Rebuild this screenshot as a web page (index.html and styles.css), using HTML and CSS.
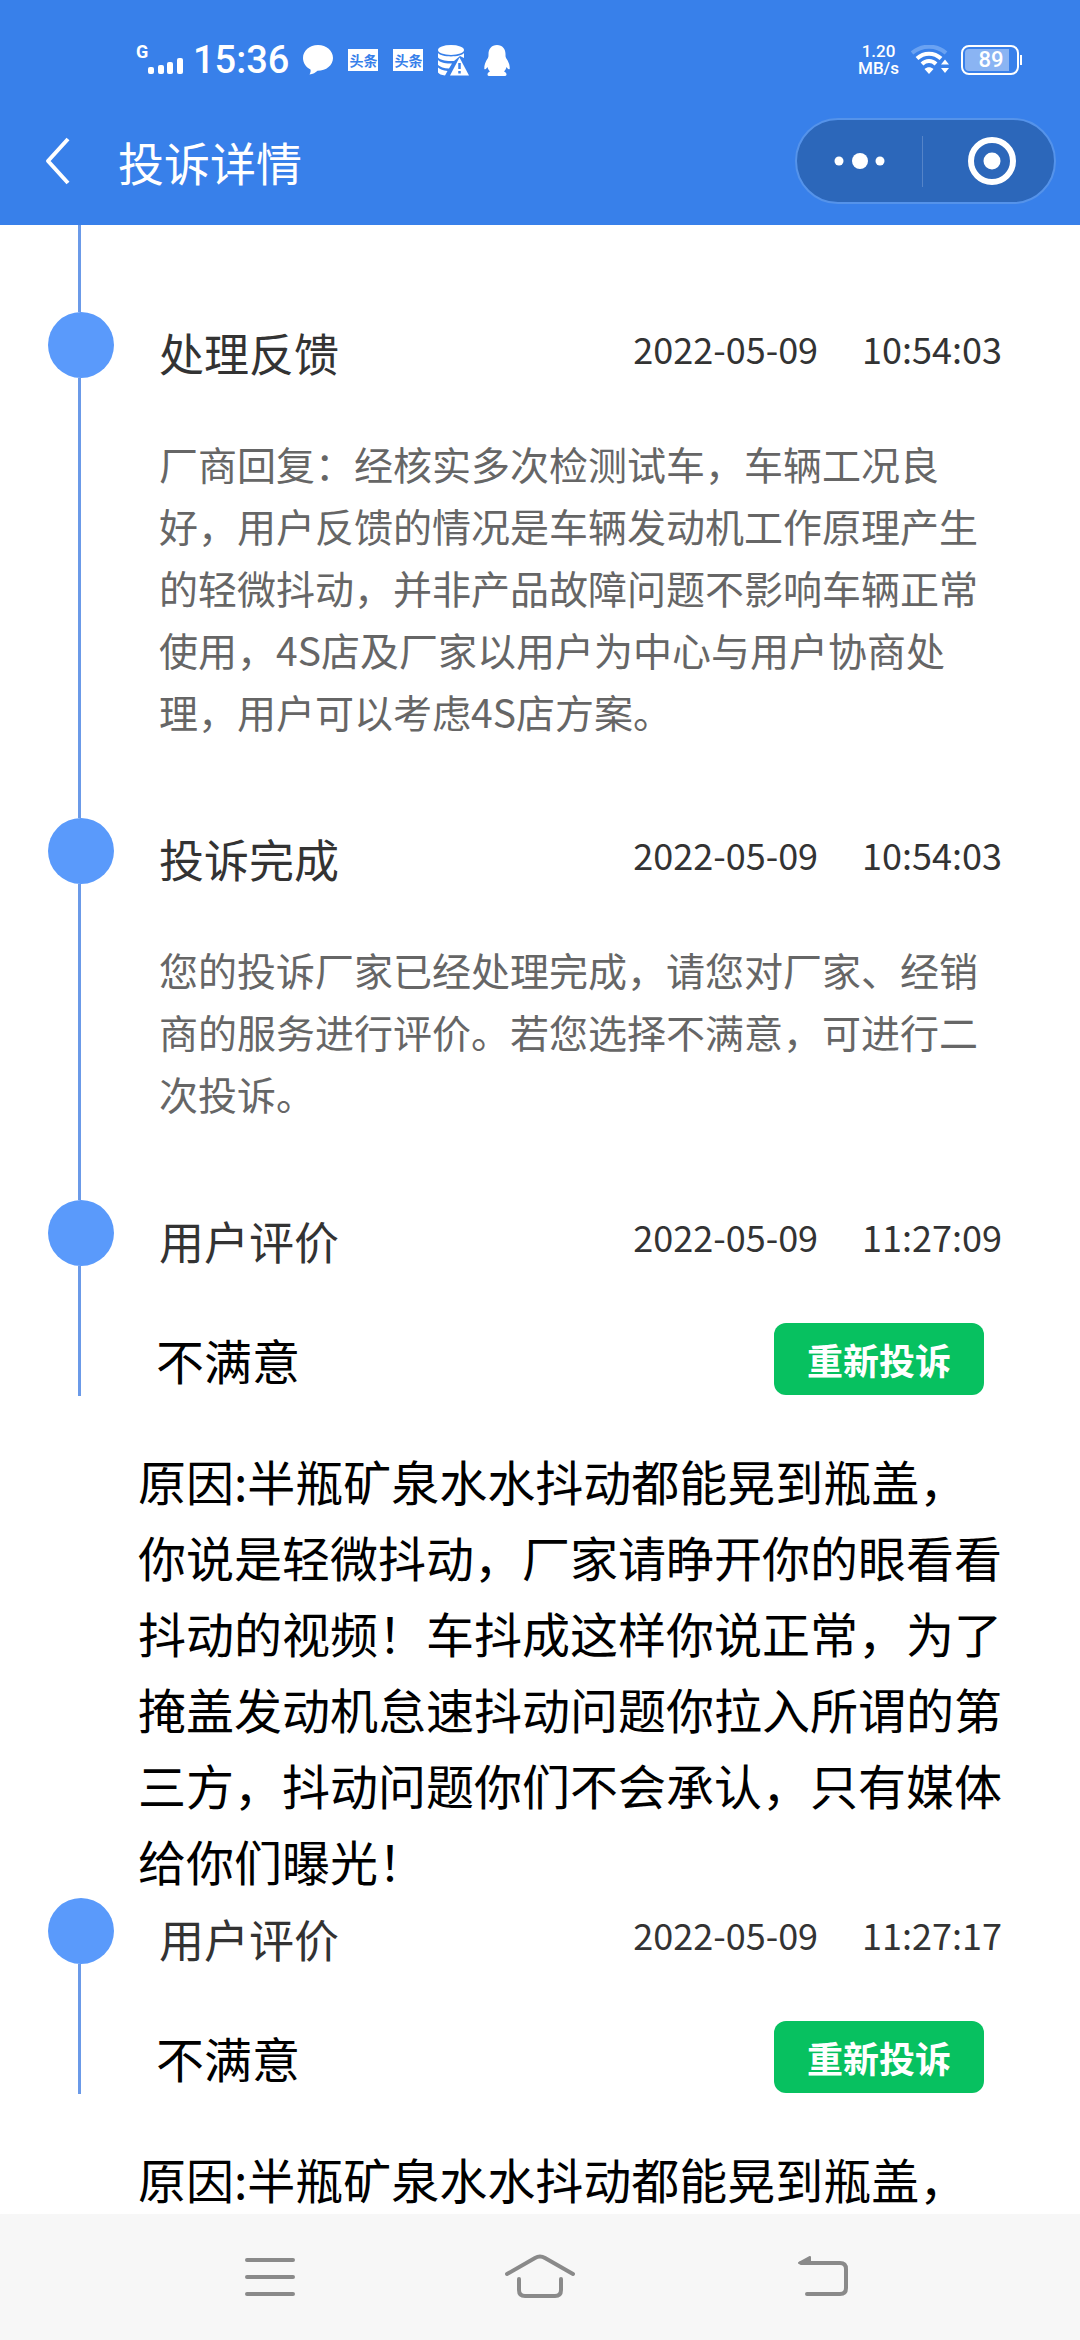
FILE: index.html
```html
<!DOCTYPE html>
<html lang="zh-CN">
<head>
<meta charset="utf-8">
<meta name="viewport" content="width=device-width">
<title>投诉详情</title>
<link rel="stylesheet" href="styles.css">
</head>
<body>
<header class="top">
  <div class="status">
    <div class="status-left">
      <div class="signal">
        <span class="signal-type">G</span>
        <svg width="36" height="16" viewBox="0 0 36 16" fill="currentColor"><rect x="0" y="9" width="6" height="7" rx="2"/><rect x="10" y="7" width="6" height="9" rx="2"/><rect x="19" y="4" width="6" height="12" rx="2"/><rect x="29" y="0" width="6" height="16" rx="2"/></svg>
      </div>
      <span class="clock">15:36</span>
      <div class="notices">
        <svg width="30" height="30" viewBox="0 0 30 30" fill="currentColor"><path d="M15 0C6.500 0 0 5.800 0 13c0 5 3 9.200 7.500 11.400.4 1.800 0 3.500-1 5 3.500-.3 6-1.600 8-3.600C23.300 25.800 30 20.200 30 13S23.500 0 15 0z"/></svg>
        <span class="toutiao">头条</span>
        <span class="toutiao">头条</span>
        <svg width="31" height="31" viewBox="0 0 31 31"><g fill="currentColor"><ellipse cx="13" cy="5" rx="13" ry="5"/><path d="M0 8c3 4.500 23 4.500 26 0v5l-4-2-6 5C8 16.500 2 15 0 12.500zM0 15c2 2.500 7 3.800 14 3.500l-3 5C6 23.300 2 22 0 20zM0 22.500c2 2 5 3 9.500 3.400L7 30.500C3.500 30 1 29 0 27.500z"/><path d="M21.500 12.500 31 30.500H12z"/></g><path d="M21.500 18v6M21.500 26v2.500" stroke="#3880ea" stroke-width="2.500"/></svg>
        <svg width="26" height="31" viewBox="0 0 26 31" fill="currentColor"><path d="M13 0C7.500 0 4.500 4 4.500 9c0 2 0 3-.7 4.200C1.500 16.500 0 20 .3 24c1.200 1 2.300-.5 3.200-2 .4 1.800 1.200 3.300 2.500 4.500-1.500.7-2.500 1.500-2.500 3 0 1.200 1 1.500 2.500 1.500h14c1.500 0 2.500-.3 2.500-1.500 0-1.500-1-2.300-2.500-3 1.300-1.200 2.100-2.700 2.500-4.500.9 1.500 2 3 3.200 2 .3-4-1.200-7.500-3.500-10.800-.7-1.200-.7-2.200-.7-4.200 0-5-3-9-8.500-9z"/></svg>
      </div>
    </div>
    <div class="status-right">
      <div class="speed"><span>1.20</span><span>MB/s</span></div>
      <svg width="38" height="30" viewBox="0 0 38 30" fill="none"><path d="M1 8C11-.5 25-.5 35 8" stroke="#6aa2f2" stroke-width="4"/><path d="M6 13.500c7-6.500 17-6.500 24 0M11 19c4-4 10-4 14 0" stroke="currentColor" stroke-width="4"/><path d="M13.500 24c3-2.500 6-2.500 9 0L18 29zM30 19.500l4-5 4 5zM30 23h8l-4 5z" fill="currentColor"/></svg>
      <div class="battery"><span class="battery-level">89</span></div>
    </div>
  </div>
  <div class="titlebar">
    <button class="back" aria-label="返回"><svg width="25" height="48" viewBox="0 0 25 48" fill="none" stroke="currentColor" stroke-width="4" stroke-linejoin="round"><path d="M23 2 3 24l20 22"/></svg></button>
    <h1 class="page-title">投诉详情</h1>
    <div class="capsule">
      <button class="capsule-btn" aria-label="更多"><svg width="52" height="16" viewBox="0 0 52 16" fill="currentColor"><circle cx="5" cy="8" r="4.500"/><circle cx="26" cy="8" r="8"/><circle cx="46" cy="8" r="4.500"/></svg></button>
      <button class="capsule-btn capsule-close" aria-label="关闭"><svg width="48" height="48" viewBox="0 0 48 48"><circle cx="24" cy="24" r="21" fill="none" stroke="currentColor" stroke-width="6"/><circle cx="24" cy="24" r="8.500" fill="currentColor"/></svg></button>
    </div>
  </div>
</header>

<main class="content">
  <div class="lead-line"></div>
  <ol class="timeline">
    <li class="entry">
      <div class="rail"><i class="dot"></i><i class="line"></i></div>
      <article>
        <div class="entry-head"><h2 class="entry-title">处理反馈</h2><time class="entry-time"><span>2022-05-09</span><span>10:54:03</span></time></div>
        <p class="entry-text">厂商回复：经核实多次检测试车，车辆工况良好，用户反馈的情况是车辆发动机工作原理产生的轻微抖动，并非产品故障问题不影响车辆正常使用，4S店及厂家以用户为中心与用户协商处理，用户可以考虑4S店方案。</p>
      </article>
    </li>
    <li class="entry">
      <div class="rail"><i class="dot"></i><i class="line"></i></div>
      <article>
        <div class="entry-head"><h2 class="entry-title">投诉完成</h2><time class="entry-time"><span>2022-05-09</span><span>10:54:03</span></time></div>
        <p class="entry-text">您的投诉厂家已经处理完成，请您对厂家、经销商的服务进行评价。若您选择不满意，可进行二次投诉。</p>
      </article>
    </li>
    <li class="entry">
      <div class="rail"><i class="dot"></i><i class="line line-short"></i></div>
      <article>
        <div class="entry-head"><h2 class="entry-title">用户评价</h2><time class="entry-time"><span>2022-05-09</span><span>11:27:09</span></time></div>
        <div class="rating"><span>不满意</span><button class="again">重新投诉</button></div>
        <p class="reason">原因:半瓶矿泉水水抖动都能晃到瓶盖，你说是轻微抖动，厂家请睁开你的眼看看抖动的视频！车抖成这样你说正常，为了掩盖发动机怠速抖动问题你拉入所谓的第三方，抖动问题你们不会承认，只有媒体给你们曝光！</p>
      </article>
    </li>
    <li class="entry">
      <div class="rail"><i class="dot"></i><i class="line line-short"></i></div>
      <article>
        <div class="entry-head"><h2 class="entry-title">用户评价</h2><time class="entry-time"><span>2022-05-09</span><span>11:27:17</span></time></div>
        <div class="rating"><span>不满意</span><button class="again">重新投诉</button></div>
        <p class="reason">原因:半瓶矿泉水水抖动都能晃到瓶盖，</p>
      </article>
    </li>
  </ol>
</main>

<nav class="sysnav">
  <button class="sys-btn" aria-label="最近任务"><svg width="90" height="48" viewBox="0 0 90 48" fill="none" stroke="currentColor" stroke-width="4" stroke-linecap="round"><path d="M22 7h46M22 24h46M22 41h46"/></svg></button>
  <button class="sys-btn" aria-label="主屏幕"><svg width="90" height="48" viewBox="0 0 90 48" fill="none" stroke="currentColor" stroke-width="4" stroke-linecap="round"><path d="M12 21 40 5q5-3 10 0l28 16M24 26v11q0 6 6 6h30q6 0 6-6V26"/></svg></button>
  <button class="sys-btn" aria-label="返回上一级"><svg width="90" height="48" viewBox="0 0 90 48" fill="none" stroke="currentColor" stroke-width="4" stroke-linecap="round"><path d="M36 10h39q6 0 6 6v19q0 6-6 6H42"/><path d="M34 10 45 4v6z" fill="currentColor" stroke-width="2" stroke-linejoin="round"/></svg></button>
</nav>
</body>
</html>
```
FILE: styles.css
```css
* { box-sizing: border-box; }

body {
  margin: 0;
  height: 100vh;
  display: flex;
  flex-direction: column;
  background: #fff;
  color: #000;
  font-family: "Noto Sans CJK SC", sans-serif;
}

button {
  border: 0;
  padding: 0;
  background: none;
  color: inherit;
  font: inherit;
}

svg { display: block; }
h1, h2, p, ol { margin: 0; padding: 0; font-weight: 400; }
ol { list-style: none; }

/* Status bar and title bar */
.top { flex: none; background: #3880ea; color: #fff; }

.status {
  height: 97px;
  padding: 23px 61px 0 136px;
  display: flex;
  align-items: center;
  justify-content: space-between;
  font-family: Roboto, sans-serif;
  font-weight: 500;
}

.status-left, .status-right, .notices { display: flex; align-items: center; }
.signal { display: flex; align-items: flex-end; height: 32px; padding-bottom: 2px; }
.signal-type { align-self: flex-start; width: 12px; font-size: 18px; line-height: 16px; font-weight: 700; }
.clock { margin-left: 9px; font-size: 38px; line-height: 44px; }
.notices { margin-left: 14px; gap: 15px; }

.toutiao {
  width: 30px;
  background: #fff;
  color: #3880ea;
  font: 700 14px/22px "Noto Sans CJK SC", sans-serif;
  text-align: center;
}

.speed { display: flex; flex-direction: column; align-items: center; font-size: 17px; line-height: 17px; }
.status-right { gap: 12px; }

.battery {
  position: relative;
  width: 58px;
  height: 30px;
  padding: 2px;
  border: 2px solid #fff;
  border-radius: 8px;
}

.battery::after {
  content: "";
  position: absolute;
  top: 8px;
  right: -5px;
  width: 2px;
  height: 10px;
  background: #fff;
}

.battery-level {
  display: block;
  width: 44px;
  padding-left: 8px;
  background: #8ab4f3;
  border-radius: 4px 0 0 4px;
  font-size: 22px;
  line-height: 22px;
  text-align: center;
}

.titlebar {
  height: 128px;
  padding: 0 24px 0 45px;
  display: flex;
  align-items: center;
}

.page-title { flex: 1; margin-left: 48px; font-size: 46px; line-height: 64px; }

.capsule {
  display: flex;
  width: 261px;
  height: 86px;
  border: 2px solid #5593ea;
  border-radius: 43px;
  background: #2c67ba;
  align-items: center;
}

.capsule-btn { flex: 1; height: 51px; display: grid; place-items: center; }
.capsule-close { padding-left: 6px; border-left: 1px solid #5584c8; }

/* Timeline */
.content { flex: 1; min-height: 0; overflow: hidden; }

.lead-line { width: 3px; height: 87px; margin-left: 78px; background: #6b9ae8; }

.entry {
  display: grid;
  grid-template-columns: 66px 1fr;
  gap: 24px;
  padding: 0 78px 0 48px;
}

.rail { display: flex; flex-direction: column; }
.dot { height: 66px; border-radius: 50%; background: #5a9afb; }
.line { flex: 1; width: 3px; margin-left: 30px; background: #6b9ae8; }
.line-short { flex: 0 0 130px; }

.entry-head {
  display: flex;
  align-items: flex-start;
  justify-content: space-between;
  padding-left: 21px;
  color: #333;
}

.entry-title { font-size: 45px; line-height: 82px; }
.entry-time { display: flex; gap: 44px; font-size: 36px; line-height: 72px; }
.entry-text { margin: 38px 21px 76px; color: #666; font-size: 39px; line-height: 62px; }

.rating {
  display: flex;
  align-items: center;
  justify-content: space-between;
  margin: 41px 18px 47px;
  font-size: 48px;
  line-height: 72px;
}

.again {
  width: 210px;
  border-radius: 12px;
  background: #07c160;
  color: #fff;
  font-size: 36px;
  font-weight: 700;
  line-height: 72px;
}

.reason { font-size: 48px; line-height: 76px; }

/* System navigation */
.sysnav {
  flex: none;
  height: 126px;
  display: flex;
  align-items: center;
  justify-content: center;
  gap: 180px;
  background: #f7f7f7;
  color: #8a8a8a;
}
```
